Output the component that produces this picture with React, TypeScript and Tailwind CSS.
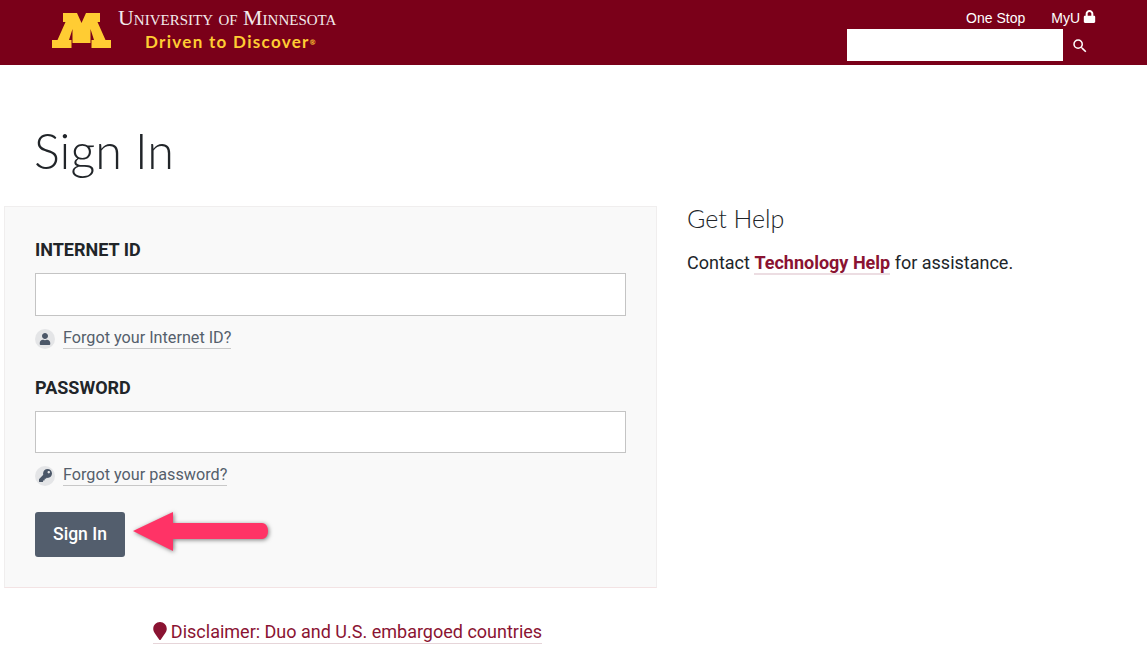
import React from 'react';
import { FaKey, FaLock, FaMapMarker, FaUser } from 'react-icons/fa';
import { MdSearch } from 'react-icons/md';

function Logo() {
  return (
    <svg width="59" height="35" viewBox="0 0 59 35" className="shrink-0">
      <path
        fill="#ffcc33"
        d="M11 0H25L29.500 10L34 0H48V9H45.500L53.500 27H59V35H39.500V27H42L38.500 16V30H20.500V16L17 27H19.500V35H0V27H5.500L13.500 9H11Z"
      />
    </svg>
  );
}

function Field({ label, helper, icon, inputClass }: { label: string; helper: string; icon: React.ReactNode; inputClass: string }) {
  return (
    <div>
      <label className="block text-[18px] font-bold leading-[24px] text-[#212529]">{label}</label>
      <input className={`mt-[11px] block w-full border border-[#c4c4c4] bg-white ${inputClass}`} />
      <div className="mt-[12px] flex items-center gap-[8px]">
        <span className="flex h-[20px] w-[20px] items-center justify-center rounded-full bg-[#e4e5e7] text-[#4b5768]">{icon}</span>
        <a className="border-b border-[#c8c8c8] text-[16.200px] leading-[20px] text-[#555f6c]">{helper}</a>
      </div>
    </div>
  );
}

export default function App() {
  return (
    <div className="h-[655px] overflow-hidden bg-white font-['Roboto',sans-serif]">
      {/* Header */}
      <header className="flex h-[65px] justify-between bg-[#7a0019]">
        <div className="flex items-start pl-[52px] pt-[13px]">
          <Logo />
          <div className="ml-[7px] -mt-[7px]">
            <div className="font-['Liberation_Serif',serif] text-[21.900px] leading-[24px] text-[#f3ebec] [font-variant:small-caps]">
              University of Minnesota
            </div>
            <div className="ml-[27px] mt-[2px] font-['Lato',sans-serif] text-[17px] font-bold leading-[20px] tracking-[1.300px] text-[#ffcc33]">
              Driven to Discover<sup className="text-[7px]">®</sup>
            </div>
          </div>
        </div>
        <div className="mr-[51px] flex flex-col items-end">
          <div className="flex h-[29px] items-center gap-[26px] pt-[7px] font-['Liberation_Sans',sans-serif] text-[14px] text-white">
            <a>One Stop</a>
            <a className="flex items-center gap-[3px]">
              MyU <FaLock size={13} className="-mt-[3px]" />
            </a>
          </div>
          <div className="flex items-center">
            <input className="h-[32px] w-[216px] bg-white" />
            <span className="flex w-[33px] justify-center pt-[1px] text-white"><MdSearch size={18} /></span>
          </div>
        </div>
      </header>

      <main className="relative">
        <h1 className="pl-[34px] pt-[56px] font-['Lato',sans-serif] text-[48.500px] font-light leading-[58px] text-[#212529]">Sign In</h1>

        <div className="mt-[27px] flex items-start">
          {/* Left column */}
          <div className="ml-[4px] w-[653px]">
            <div className="flex h-[382px] flex-col border border-[#f0eeee] border-b-[#f3e3e4] bg-[#f9f9f9] px-[30px] pt-[31px]">
              <Field label="INTERNET ID" helper="Forgot your Internet ID?" icon={<FaUser size={12} />} inputClass="h-[43px]" />
              <div className="mt-[27px]">
                <Field label="PASSWORD" helper="Forgot your password?" icon={<FaKey size={13} />} inputClass="h-[42px]" />
              </div>
              <button className="mt-[26px] h-[45px] w-[90px] rounded-[3px] bg-[#535e6d] text-[17.500px] font-medium text-white">Sign In</button>
            </div>
            <div className="mt-[33px] flex justify-center pl-[34px]">
              <a className="flex items-center gap-[4px] border-b border-[#e6d5d9] text-[18px] leading-[22px] text-[#8a1332]">
                <FaMapMarker className="-mt-[2px] h-[18px] w-[14px]" />
                Disclaimer: Duo and U.S. embargoed countries
              </a>
            </div>
          </div>

          {/* Right column */}
          <div className="ml-[30px] -mt-[2px]">
            <h2 className="font-['Lato',sans-serif] text-[25px] font-light leading-[29px] text-[#212529]">Get Help</h2>
            <p className="mt-[18px] text-[18px] leading-[24px] text-[#212529]">
              Contact <a className="border-b-2 border-[#ecdde2] font-bold text-[#8a1332]">Technology Help</a> for assistance.
            </p>
          </div>
        </div>

        {/* Annotation arrow */}
        <svg
          width="146"
          height="48"
          viewBox="0 0 146 48"
          className="absolute left-[132px] top-[445px] drop-shadow-[1px_1px_2px_rgba(0,0,0,0.5)]"
        >
          <path d="M1 21L41 2V13H130C138 13 138 29 130 29H41V41Z" fill="#ff3366" />
        </svg>
      </main>
    </div>
  );
}
